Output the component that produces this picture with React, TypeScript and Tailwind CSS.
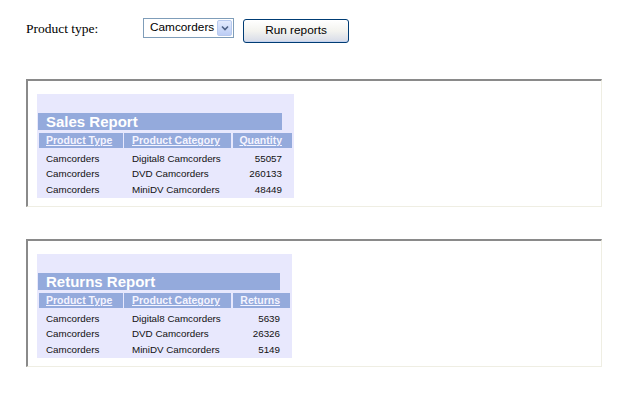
import React from 'react';

interface Row {
  type: string;
  category: string;
  value: number;
}

interface Report {
  title: string;
  valueLabel: string;
  rows: Row[];
}

const reports: Report[] = [
  {
    title: 'Sales Report',
    valueLabel: 'Quantity',
    rows: [
      { type: 'Camcorders', category: 'Digital8 Camcorders', value: 55057 },
      { type: 'Camcorders', category: 'DVD Camcorders', value: 260133 },
      { type: 'Camcorders', category: 'MiniDV Camcorders', value: 48449 },
    ],
  },
  {
    title: 'Returns Report',
    valueLabel: 'Returns',
    rows: [
      { type: 'Camcorders', category: 'Digital8 Camcorders', value: 5639 },
      { type: 'Camcorders', category: 'DVD Camcorders', value: 26326 },
      { type: 'Camcorders', category: 'MiniDV Camcorders', value: 5149 },
    ],
  },
];

function ReportPanel({ report, wide }: { report: Report; wide: boolean }) {
  return (
    <div className="border-t-2 border-l-2 border-t-[#8a8a8a] border-l-[#8a8a8a] border-r border-b border-r-[#efeee3] border-b-[#efeee3] pl-[9px] pt-[13px] pb-[8px]">
      <div className={`bg-[#e8e8fd] h-[104px] pt-[19px] pl-[1px] ${wide ? 'w-[257px]' : 'w-[255px]'}`}>
        <div
          className={`h-[17px] bg-[#94aadc] pl-[8px] flex items-center text-white font-bold text-[15px] leading-none ${
            wide ? 'w-[244px]' : 'w-[242px]'
          }`}
        >
          {report.title}
        </div>
        <div className="mt-[3px] flex h-[15px] text-[10.5px] font-bold text-[#f4f4ff] leading-none">
          <div className="ml-[1px] w-[84px] bg-[#94aadc] pl-[7px] flex items-center">
            <span className="underline">Product Type</span>
          </div>
          <div className="ml-[1px] w-[107px] bg-[#94aadc] pl-[8px] flex items-center">
            <span className="underline">Product Category</span>
          </div>
          <div
            className={`ml-[2px] bg-[#94aadc] pr-[10px] flex items-center justify-end ${
              wide ? 'w-[59px]' : 'w-[57px]'
            }`}
          >
            <span className="underline">{report.valueLabel}</span>
          </div>
        </div>
        <div className="mt-[3px] text-[9.8px] text-[#111] leading-none">
          {report.rows.map((r, i) => (
            <div key={i} className="flex h-[15.5px] items-center">
              <div className="ml-[1px] w-[84px] pl-[7px]">{r.type}</div>
              <div className="ml-[1px] w-[107px] pl-[8px]">{r.category}</div>
              <div className={`ml-[2px] pr-[10px] text-right ${wide ? 'w-[59px]' : 'w-[57px]'}`}>{r.value}</div>
            </div>
          ))}
        </div>
      </div>
    </div>
  );
}

export default function App() {
  return (
    <div className="w-[628px] h-[399px] bg-white font-['Liberation_Sans',Arial,sans-serif]">
      <div className="pl-[26px] pt-[18px] w-[602px]">
        <div className="flex items-start">
          <div className="w-[117px] pt-[2px] font-['Liberation_Serif','Times_New_Roman',serif] text-[13.5px] text-black leading-[17px]">
            Product type:
          </div>
          <div className="w-[91px] h-[20px] border border-[#7f9db9] bg-white flex items-center">
            <span className="flex-1 pl-[6px] text-[11.8px] text-black leading-none">Camcorders</span>
            <div className="w-[15px] h-[16px] mr-[1px] bg-gradient-to-b from-[#e3ebfd] to-[#bccdf5] border border-[#b7c9ee] rounded-[2px] flex items-center justify-center">
              <svg width="8" height="6" viewBox="0 0 8 6">
                <path d="M1 1.5 L4 4.5 L7 1.5" fill="none" stroke="#4d6185" strokeWidth="1.6" />
              </svg>
            </div>
          </div>
          <div className="ml-[9px] mt-[1px] w-[106px] h-[24px] rounded-[3px] border border-[#003c74] bg-gradient-to-b from-white via-[#f3f3ef] to-[#d6dbe8] shadow-[inset_0_-1px_0_#c4d2ef,inset_0_1px_0_#ffffff] flex items-center justify-center text-[11.8px] text-black">
            Run reports
          </div>
        </div>
        <div className="mt-[36px] flex flex-col gap-[32px]">
          {reports.map((r, i) => (
            <ReportPanel key={r.title} report={r} wide={i === 0} />
          ))}
        </div>
      </div>
    </div>
  );
}
